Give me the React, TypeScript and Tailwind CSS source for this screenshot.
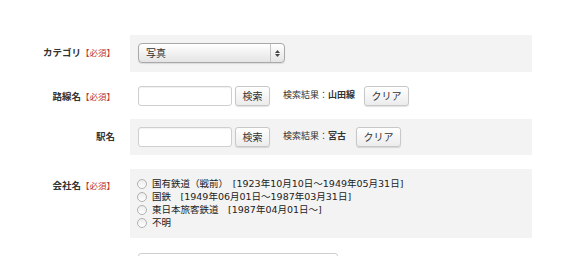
import React from "react";

const font = {
  fontFamily: '"DejaVu Sans", "Noto Sans CJK JP", sans-serif',
};

function Label({ text, required }: { text: string; required?: boolean }) {
  return (
    <div className="w-[130px] shrink-0 text-right pr-[15px] leading-[13px] whitespace-nowrap">
      <span className="font-bold text-[9.5px] text-[#333]">{text}</span>
      {required && <span className="text-[8.5px] text-[#c0392b]">【必須】</span>}
    </div>
  );
}

function Btn({ children, w }: { children: React.ReactNode; w: string }) {
  return (
    <div
      className={`${w} h-[20px] shrink-0 flex items-center justify-center rounded-[3px] border border-[#c8c8c8] bg-gradient-to-b from-white to-[#ececec] shadow-[0_1px_1px_rgba(0,0,0,0.12)] text-[10px] text-[#333]`}
    >
      {children}
    </div>
  );
}

function SearchRow({ result, clearGap }: { result: string; clearGap: string }) {
  return (
    <div className="flex items-center">
      <div className="w-[94px] h-[20px] rounded-[3px] border border-[#cfcfcf] bg-white shadow-[inset_0_1px_1px_rgba(0,0,0,0.06)]" />
      <div className="ml-[3px]">
        <Btn w="w-[35px]">検索</Btn>
      </div>
      <div className="ml-[13px] text-[9px] text-[#333] whitespace-nowrap">
        検索結果：<span className="font-bold">{result}</span>
      </div>
      <div className={clearGap}>
        <Btn w="w-[45px]">クリア</Btn>
      </div>
    </div>
  );
}

function Radio({ children }: { children: React.ReactNode }) {
  return (
    <div className="flex items-center h-[13px] leading-[13px]">
      <div className="w-[10px] h-[10px] rounded-full border border-[#b0b0b0] bg-gradient-to-b from-[#ececec] to-white shrink-0" />
      <span className="ml-[5px] text-[9.5px] text-[#222] whitespace-pre">{children}</span>
    </div>
  );
}

export default function App() {
  return (
    <div className="w-[570px] h-[256px] overflow-hidden bg-white pt-[35px]" style={font}>
      {/* Row 1 */}
      <div className="flex h-[37px]">
        <div className="flex items-center pb-[3px]">
          <Label text="カテゴリ" required />
        </div>
        <div className="w-[402px] bg-[#f3f3f3] flex items-center pl-[8px] pb-[1px]">
          <div className="w-[147px] h-[20px] rounded-[4px] border border-[#a9a9a9] bg-gradient-to-b from-white to-[#e4e4e4] flex items-center shadow-[0_1px_1px_rgba(0,0,0,0.1)]">
            <span className="flex-1 pl-[7px] text-[10px] text-[#333]">写真</span>
            <div className="w-[14px] h-full border-l border-[#c4c4c4] flex flex-col items-center justify-center gap-[1px]">
              <svg width="5" height="3" viewBox="0 0 5 3"><path d="M2.5 0L5 3H0z" fill="#444" /></svg>
              <svg width="5" height="3" viewBox="0 0 5 3"><path d="M0 0h5L2.5 3z" fill="#444" /></svg>
            </div>
          </div>
        </div>
      </div>
      {/* Row 2 */}
      <div className="flex h-[47px]">
        <div className="flex items-center pt-[1px]">
          <Label text="路線名" required />
        </div>
        <div className="w-[402px] bg-white flex items-center pl-[8px] pt-[1px]">
          <SearchRow result="山田線" clearGap="ml-[9px]" />
        </div>
      </div>
      {/* Row 3 */}
      <div className="flex h-[36px]">
        <div className="flex items-center pb-[3px]">
          <Label text="駅名" />
        </div>
        <div className="w-[402px] bg-[#f3f3f3] flex items-center pl-[8px]">
          <SearchRow result="宮古" clearGap="ml-[10px]" />
        </div>
      </div>
      {/* Row 4 */}
      <div className="flex mt-[14px] h-[69px]">
        <div className="pt-[8px]">
          <Label text="会社名" required />
        </div>
        <div className="w-[402px] bg-[#f3f3f3] pl-[7px] pt-[8px]">
          <Radio>国有鉄道（戦前）　[1923年10月10日～1949年05月31日]</Radio>
          <Radio>国鉄　[1949年06月01日～1987年03月31日]</Radio>
          <Radio>東日本旅客鉄道　[1987年04月01日～]</Radio>
          <Radio>不明</Radio>
        </div>
      </div>
      {/* Row 5 */}
      <div className="flex mt-[15px]">
        <div className="w-[130px] shrink-0" />
        <div className="w-[402px] pl-[8px]">
          <div className="w-[200px] h-[20px] rounded-[3px] border border-[#cfcfcf] bg-white" />
        </div>
      </div>
    </div>
  );
}
